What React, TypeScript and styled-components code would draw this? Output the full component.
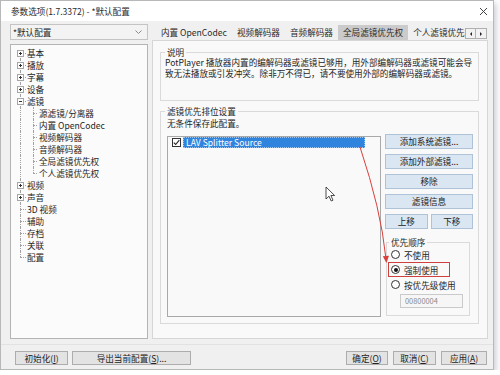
import React from 'react';
import styled, { createGlobalStyle, css } from 'styled-components';

const GlobalStyle = createGlobalStyle`
  html, body { margin: 0; padding: 0; background: #ffffff; }
  body {
    font-family: "Noto Sans CJK SC", "Noto Sans", sans-serif;
    font-size: 8.6px;
    color: #1e1e1e;
  }
  * { box-sizing: border-box; }
`;

const Window = styled.div`
  position: relative;
  width: 494px;
  height: 370px;
  background: #f0f0f0;
  border: 1px solid #b8b8b8;
  box-shadow: 2px 3px 6px rgba(70, 70, 100, 0.28);
  display: flex;
  flex-direction: column;
`;

const TitleBar = styled.div`
  flex: none;
  height: 20px;
  background: #ffffff;
  display: flex;
  align-items: center;
  justify-content: space-between;
  padding: 0 5px 0 10px;
  color: #2b2b2b;
  line-height: 20px;
`;

const Main = styled.div`
  flex: none;
  height: 318px;
  display: flex;
  gap: 4px;
  padding: 3px 5px 0 9px;
`;

const LeftCol = styled.div`
  flex: none;
  width: 138px;
  display: flex;
  flex-direction: column;
  gap: 4px;
`;

const Combo = styled.div`
  flex: none;
  height: 16px;
  border: 1px solid #c4c4c4;
  background: #f3f3f3;
  display: flex;
  align-items: center;
  justify-content: space-between;
  padding: 0 5px 0 2px;
  line-height: 14px;
`;

const TreePanel = styled.div`
  flex: 1;
  border: 1px solid #b4b4b4;
  background: #fbfbfb;
  padding-top: 2px;
`;

const TreeRow = styled.div`
  display: flex;
  height: 12px;
  line-height: 12px;
  white-space: nowrap;
  color: #1e1e1e;
`;

const Lead = styled.span<{ $w: number; $x: number; $first?: boolean; $last?: boolean; $stub?: number }>`
  position: relative;
  flex: none;
  width: ${(p) => p.$w}px;
  height: 12px;
  &::before {
    content: '';
    position: absolute;
    left: ${(p) => p.$x}px;
    top: ${(p) => (p.$first ? '6px' : '0')};
    bottom: ${(p) => (p.$last ? '6px' : '0')};
    border-left: 1px dotted #a2a2a2;
  }
  ${(p) =>
    p.$stub
      ? css`
          &::after {
            content: '';
            position: absolute;
            left: ${p.$x}px;
            top: 6px;
            width: ${p.$stub}px;
            border-top: 1px dotted #a2a2a2;
          }
        `
      : ''}
`;

const ExpBox = styled.span<{ $open?: boolean }>`
  position: absolute;
  left: 6px;
  top: 3px;
  width: 7px;
  height: 7px;
  border: 1px solid #a6a6a6;
  background: #ffffff;
  z-index: 1;
  &::before {
    content: '';
    position: absolute;
    left: 1px;
    top: 2px;
    width: 3px;
    height: 1px;
    background: #333;
  }
  ${(p) =>
    !p.$open &&
    css`
      &::after {
        content: '';
        position: absolute;
        left: 2px;
        top: 1px;
        width: 1px;
        height: 3px;
        background: #333;
      }
    `}
`;

const RightCol = styled.div`
  flex: 1;
  min-width: 0;
  display: flex;
  flex-direction: column;
`;

const TabsRow = styled.div`
  flex: none;
  height: 16px;
  display: flex;
  align-items: flex-end;
`;

const TabStrip = styled.div`
  flex: 1;
  min-width: 0;
  height: 100%;
  display: flex;
  align-items: flex-end;
  overflow: hidden;
  padding-left: 4px;
`;

const Tab = styled.div<{ $active?: boolean }>`
  flex: none;
  height: 15px;
  line-height: 15px;
  padding: 0 5px;
  white-space: nowrap;
  color: #2a2a2a;
  background: ${(p) => (p.$active ? '#cbcbcb' : 'transparent')};
`;

const ScrollBtns = styled.div`
  flex: none;
  display: flex;
  margin: 0 1px 1px 0;
`;

const ScrollBtn = styled.div<{ $dir: 'l' | 'r' }>`
  width: 11px;
  height: 11px;
  border: 1px solid #b0b0b0;
  background: #f2f2f2;
  display: flex;
  align-items: center;
  justify-content: center;
  & + & { border-left: none; }
  &::before {
    content: '';
    width: 0;
    height: 0;
    border-top: 2px solid transparent;
    border-bottom: 2px solid transparent;
    ${(p) => (p.$dir === 'l' ? 'border-right: 2px solid #222;' : 'border-left: 2px solid #222;')}
  }
`;

const TabPanel = styled.div`
  flex: 1;
  border: 1px solid #d6d6d6;
  background: #f9f9f9;
  padding: 6px 8px 0 7px;
  display: flex;
  flex-direction: column;
`;

const Group = styled.fieldset<{ $h: number; $w?: number; $pad?: number }>`
  margin: 0;
  padding: 0 ${(p) => p.$pad ?? 4}px;
  border: 1px solid #dadada;
  height: ${(p) => p.$h}px;
  ${(p) => (p.$w ? `width: ${p.$w}px; flex: none;` : 'min-width: 0;')}
`;

const Legend = styled.legend<{ $indent?: number }>`
  padding: 0 2px;
  margin-left: ${(p) => p.$indent ?? 0}px;
  line-height: 10px;
  color: #1e1e1e;
`;

const DescText = styled.div`
  line-height: 11px;
  white-space: nowrap;
  color: #1e1e1e;
`;

const FilterGroupWrap = styled.div`
  margin-top: 5px;
`;

const Note = styled.div`
  margin-top: 2px;
  padding-left: 2px;
  line-height: 10px;
`;

const ContentRow = styled.div`
  display: flex;
  gap: 4px;
  margin-top: 6px;
  padding-left: 2px;
`;

const ListBox = styled.div`
  flex: none;
  width: 214px;
  height: 181px;
  margin-top: 2px;
  border: 1px solid #a9a9a9;
  background: #f9f9f9;
  padding: 0 4px;
`;

const ListItem = styled.div`
  display: flex;
  align-items: center;
  gap: 2px;
  height: 11px;
`;

const CheckBox = styled.span`
  flex: none;
  width: 9px;
  height: 9px;
  border: 1px solid #333;
  background: #fff;
  display: flex;
  align-items: center;
  justify-content: center;
`;

const ItemLabel = styled.span`
  width: 182px;
  height: 11px;
  line-height: 9px;
  padding-left: 2px;
  color: #ffffff;
  background: #2f84de;
  border: 1px dotted #9cc6f2;
  white-space: nowrap;
`;

const SideCol = styled.div`
  flex: none;
  width: 88px;
  display: flex;
  flex-direction: column;
`;

const ButtonStack = styled.div`
  display: flex;
  flex-direction: column;
  gap: 5px;
`;

const SplitRow = styled.div`
  display: flex;
  gap: 3px;
`;

const BlueButton = styled.div`
  flex: 1;
  height: 15px;
  line-height: 13px;
  text-align: center;
  border: 1px solid #aec3d8;
  background: #dae6f2;
  color: #222;
  white-space: nowrap;
`;

const OrderWrap = styled.div`
  margin: 8px 0 0 1px;
`;

const RadioRow = styled.div`
  position: relative;
  display: flex;
  align-items: center;
  gap: 4px;
  height: 15px;
  padding-left: 4px;
  white-space: nowrap;
`;

const Radio = styled.span<{ $checked?: boolean }>`
  flex: none;
  width: 9px;
  height: 9px;
  border: 1px solid #333;
  border-radius: 50%;
  background: #fff;
  display: flex;
  align-items: center;
  justify-content: center;
  &::before {
    content: '';
    width: 4px;
    height: 4px;
    border-radius: 50%;
    background: ${(p) => (p.$checked ? '#111' : 'transparent')};
  }
`;

const Mark = styled.span`
  position: absolute;
  left: 1px;
  top: 0;
  width: 62px;
  height: 15px;
  border: 1.5px solid #d0403c;
  pointer-events: none;
`;

const CodeInput = styled.div`
  margin: 2px 0 0 13px;
  width: 63px;
  height: 14px;
  border: 1px solid #cacaca;
  background: #f6f6f6;
  color: #8c8c8c;
  font-size: 7.4px;
  line-height: 12px;
  padding-left: 4px;
`;

const Footer = styled.div`
  flex: none;
  margin-top: 5px;
  border-top: 1px solid #e2e2e2;
  padding: 6px 6px 4px 14px;
  display: flex;
  align-items: center;
`;

const BtnGroup = styled.div<{ $gap: number }>`
  display: flex;
  gap: ${(p) => p.$gap}px;
`;

const Spacer = styled.div`
  flex: 1;
`;

const FootBtn = styled.div<{ $w: number }>`
  width: ${(p) => p.$w}px;
  height: 14px;
  line-height: 12px;
  text-align: center;
  border: 1px solid #adadad;
  background: #e3e3e3;
  color: #222;
  white-space: nowrap;
`;

const Overlay = styled.svg`
  position: absolute;
  left: -1px;
  top: -1px;
  width: 500px;
  height: 375px;
  pointer-events: none;
  overflow: visible;
`;

type Node = { label: string; exp?: '+' | '-'; child?: boolean; last?: boolean; first?: boolean };

const tree: Node[] = [
  { label: '基本', exp: '+', first: true },
  { label: '播放', exp: '+' },
  { label: '字幕', exp: '+' },
  { label: '设备', exp: '+' },
  { label: '滤镜', exp: '-' },
  { label: '源滤镜/分离器', child: true, first: true },
  { label: '内置 OpenCodec', child: true },
  { label: '视频解码器', child: true },
  { label: '音频解码器', child: true },
  { label: '全局滤镜优先权', child: true },
  { label: '个人滤镜优先权', child: true, last: true },
  { label: '视频', exp: '+' },
  { label: '声音', exp: '+' },
  { label: '3D 视频' },
  { label: '辅助' },
  { label: '存档' },
  { label: '关联' },
  { label: '配置', last: true },
];

const tabs = ['内置 OpenCodec', '视频解码器', '音频解码器', '全局滤镜优先权', '个人滤镜优先权'];

function TreeView() {
  return (
    <TreePanel>
      {tree.map((n) =>
        n.child ? (
          <TreeRow key={n.label}>
            <Lead $w={16} $x={9} />
            <Lead $w={12} $x={6} $stub={4} $last={n.last} />
            <span>{n.label}</span>
          </TreeRow>
        ) : (
          <TreeRow key={n.label}>
            <Lead $w={16} $x={9} $stub={6} $first={n.first} $last={n.last}>
              {n.exp && <ExpBox $open={n.exp === '-'} />}
            </Lead>
            <span>{n.label}</span>
          </TreeRow>
        )
      )}
    </TreePanel>
  );
}

export default function App() {
  return (
    <>
      <GlobalStyle />
      <Window>
        <TitleBar>
          <span>参数选项(1.7.3372) - *默认配置</span>
          <svg width="9" height="9" viewBox="0 0 9 9">
            <path d="M1 1 L8 8 M8 1 L1 8" stroke="#444" strokeWidth="1" />
          </svg>
        </TitleBar>
        <Main>
          <LeftCol>
            <Combo>
              <span>*默认配置</span>
              <svg width="7" height="4" viewBox="0 0 7 4">
                <path d="M0.5 0.5 L3.5 3.5 L6.5 0.5" fill="none" stroke="#8a8a8a" strokeWidth="1" />
              </svg>
            </Combo>
            <TreeView />
          </LeftCol>
          <RightCol>
            <TabsRow>
              <TabStrip>
                {tabs.map((t) => (
                  <Tab key={t} $active={t === '全局滤镜优先权'}>
                    {t}
                  </Tab>
                ))}
              </TabStrip>
              <ScrollBtns>
                <ScrollBtn $dir="l" />
                <ScrollBtn $dir="r" />
              </ScrollBtns>
            </TabsRow>
            <TabPanel>
              <Group $h={54}>
                <Legend>说明</Legend>
                <DescText>PotPlayer 播放器内置的编解码器或滤镜已够用，用外部编解码器或滤镜可能会导</DescText>
                <DescText>致无法播放或引发冲突。除非万不得已，请不要使用外部的编解码器或滤镜。</DescText>
              </Group>
              <FilterGroupWrap>
                <Group $h={218}>
                  <Legend>滤镜优先排位设置</Legend>
                  <Note>无条件保存此配置。</Note>
                  <ContentRow>
                    <ListBox>
                      <ListItem>
                        <CheckBox>
                          <svg width="7" height="7" viewBox="0 0 7 7">
                            <path d="M0.8 3.6 L2.7 5.5 L6.3 1.2" fill="none" stroke="#222" strokeWidth="1.1" />
                          </svg>
                        </CheckBox>
                        <ItemLabel>LAV Splitter Source</ItemLabel>
                      </ListItem>
                    </ListBox>
                    <SideCol>
                      <ButtonStack>
                        <BlueButton>添加系统滤镜...</BlueButton>
                        <BlueButton>添加外部滤镜...</BlueButton>
                        <BlueButton>移除</BlueButton>
                        <BlueButton>滤镜信息</BlueButton>
                        <SplitRow>
                          <BlueButton>上移</BlueButton>
                          <BlueButton>下移</BlueButton>
                        </SplitRow>
                      </ButtonStack>
                      <OrderWrap>
                        <Group $h={79} $w={84} $pad={0}>
                          <Legend $indent={2}>优先顺序</Legend>
                          <RadioRow>
                            <Radio />
                            <span>不使用</span>
                          </RadioRow>
                          <RadioRow>
                            <Radio $checked />
                            <span>强制使用</span>
                            <Mark />
                          </RadioRow>
                          <RadioRow>
                            <Radio />
                            <span>按优先级使用</span>
                          </RadioRow>
                          <CodeInput>00800004</CodeInput>
                        </Group>
                      </OrderWrap>
                    </SideCol>
                  </ContentRow>
                </Group>
              </FilterGroupWrap>
            </TabPanel>
          </RightCol>
        </Main>
        <Footer>
          <BtnGroup $gap={4}>
            <FootBtn $w={53}>
              初始化(<u>I</u>)
            </FootBtn>
            <FootBtn $w={119}>
              导出当前配置(<u>S</u>)...
            </FootBtn>
          </BtnGroup>
          <Spacer />
          <BtnGroup $gap={5}>
            <FootBtn $w={42}>
              确定(<u>O</u>)
            </FootBtn>
            <FootBtn $w={43}>
              取消(<u>C</u>)
            </FootBtn>
            <FootBtn $w={46}>
              应用(<u>A</u>)
            </FootBtn>
          </BtnGroup>
        </Footer>
        <Overlay viewBox="0 0 500 375">
          <path d="M360 147 Q381 210 385.6 256" fill="none" stroke="#d8403c" strokeWidth="1" />
          <polygon points="386.4,263 389,255.7 382.8,256.3" fill="#d8403c" />
          <path
            d="M326 187 L326 199 L329 196.2 L331.2 201 L333 200.2 L330.9 195.5 L334.6 195.5 Z"
            fill="#ffffff"
            stroke="#222"
            strokeWidth="0.8"
            strokeLinejoin="round"
          />
        </Overlay>
      </Window>
    </>
  );
}
